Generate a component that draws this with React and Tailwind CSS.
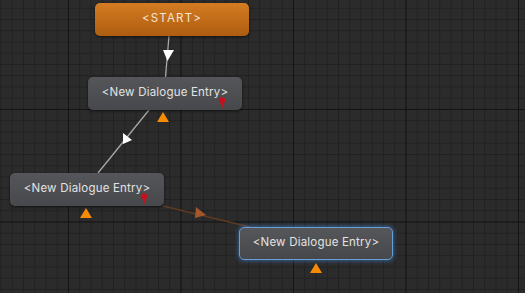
import React from 'react';

const nodes = [
  { id: 'start', label: '<START>', x: 95, y: 3, kind: 'start' },
  { id: 'n1', label: '<New Dialogue Entry>', x: 88, y: 77, pin: true, tri: 75 },
  { id: 'n2', label: '<New Dialogue Entry>', x: 10, y: 173, pin: true, tri: 76 },
  { id: 'n3', label: '<New Dialogue Entry>', x: 239, y: 227, selected: true, tri: 76 },
];

const Grid = () => (
  <svg className="absolute inset-0" width="525" height="293">
    <defs>
      <pattern id="minor" x="0.5" y="7.75" width="11.25" height="11.25" patternUnits="userSpaceOnUse">
        <path d="M0 0.5H11.25M0.5 0V11.25" stroke="#212121" strokeWidth="1" fill="none" />
      </pattern>
      <pattern id="major" x="68" y="109" width="112.5" height="112.5" patternUnits="userSpaceOnUse">
        <path d="M0 0.5H112.5M0.5 0V112.5" stroke="#141414" strokeWidth="1" fill="none" />
      </pattern>
    </defs>
    <rect width="525" height="293" fill="#2b2b2b" />
    <rect width="525" height="293" fill="url(#minor)" />
    <rect width="525" height="293" fill="url(#major)" />

    {/* links */}
    <line x1="169" y1="36" x2="165.5" y2="77" stroke="#a8a8a8" strokeWidth="1.3" />
    <polygon points="163,50 174,50 167.5,61" fill="#ffffff" />

    <line x1="149" y1="110" x2="98" y2="173" stroke="#a8a8a8" strokeWidth="1.3" />
    <polygon points="123,133 132,140 123,144" fill="#ffffff" />

    <line x1="163" y1="206" x2="250" y2="227" stroke="#5e3a22" strokeWidth="1.5" />
    <polygon points="196,207 206,215 195,218" fill="#a3562a" />
  </svg>
);

const Pin = ({ className }) => (
  <svg className={className} width="8" height="11" viewBox="0 0 8 11">
    <circle cx="4" cy="3.5" r="3.2" fill="#c4121c" />
    <rect x="3" y="5" width="2" height="5.5" fill="#c4121c" />
  </svg>
);

const Node = ({ node }) => {
  const base = 'absolute w-[154px] h-[33px] rounded-[5px] flex items-center justify-center';
  const look =
    node.kind === 'start'
      ? 'text-[11.5px] bg-gradient-to-b from-[#d47c22] to-[#ae5d10] text-[#f3e6d6] tracking-[1.2px] shadow-[0_1px_3px_rgba(0,0,0,0.6)]'
      : node.selected
      ? 'text-[11.5px] tracking-[0.2px] bg-gradient-to-b from-[#55575b] to-[#46474a] text-[#e2e2e2] border border-[#6a9fd6] shadow-[0_0_4px_1px_rgba(70,140,230,0.55)]'
      : 'text-[11.5px] tracking-[0.2px] bg-gradient-to-b from-[#55565a] to-[#47484b] text-[#e2e2e2] shadow-[0_1px_3px_rgba(0,0,0,0.6)]';
  return (
    <div className={`${base} ${look}`} style={{ left: node.x, top: node.y, fontFamily: 'Inter, "Liberation Sans", sans-serif' }}>
      <span className="-mt-[2px]">{node.label}</span>
      {node.pin && <Pin className="absolute right-[16px] bottom-[2px]" />}
      {node.tri && (
        <div
          className="absolute top-[35px] w-0 h-0 border-l-[6px] border-r-[6px] border-b-[10px] border-l-transparent border-r-transparent border-b-[#f58a07]"
          style={{ left: node.tri - 6 }}
        />
      )}
    </div>
  );
};

export default function App() {
  return (
    <div className="relative w-[525px] h-[293px] overflow-hidden bg-[#2b2b2b]">
      <Grid />
      {nodes.map((n) => (
        <Node key={n.id} node={n} />
      ))}
    </div>
  );
}
